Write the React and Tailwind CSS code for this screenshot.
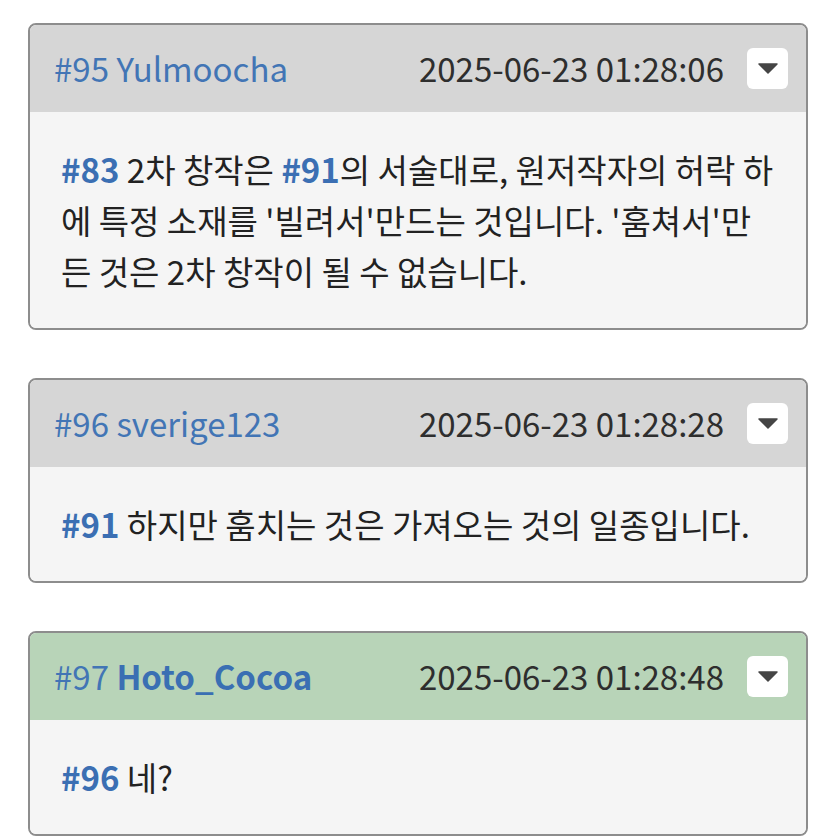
import React from "react";

const font = { fontFamily: '"Noto Sans CJK KR", "Noto Sans", sans-serif' };

function Ref({ n }) {
  return <span className="font-bold text-[#3b6fb3]">#{n}</span>;
}

function Card({ num, name, bold, date, green, children }) {
  return (
    <div className="rounded-[8px] border-2 border-[#8d8d8d] overflow-hidden">
      <div
        className={
          "h-[87px] flex items-center justify-between pl-[24px] pr-[18px] " +
          (green ? "bg-[#b8d4b8]" : "bg-[#d6d6d6]")
        }
      >
        <div className="text-[33px] text-[#4275b5] leading-none">
          #{num}{" "}
          <span className={bold ? "font-bold text-[#3a6fb3]" : ""}>{name}</span>
        </div>
        <div className="flex items-center">
          <div className="text-[33px] text-[#2e2e2e] leading-none mr-[23px]">{date}</div>
          <div className="w-[41px] h-[41px] bg-white rounded-[6px] flex items-center justify-center">
            <svg width="20" height="11" viewBox="0 0 20 11">
              <path d="M1 1 L19 1 L10 10 Z" fill="#454545" stroke="#454545" strokeWidth="1.5" strokeLinejoin="round" />
            </svg>
          </div>
        </div>
      </div>
      <div className="bg-[#f5f5f5] px-[31px] pt-[32px] pb-[31px] text-[33px] leading-[51px] text-[#222]">
        {children}
      </div>
    </div>
  );
}

export default function App() {
  return (
    <div className="bg-white min-h-[839px] px-[28px] pt-[23px] flex flex-col gap-[48px]" style={font}>
      <Card num="95" name="Yulmoocha" date="2025-06-23 01:28:06">
        <Ref n="83" /> 2차 창작은 <Ref n="91" />의 서술대로, 원저작자의 허락 하<br />
        에 특정 소재를 '빌려서'만드는 것입니다. '훔쳐서'만<br />
        든 것은 2차 창작이 될 수 없습니다.
      </Card>
      <Card num="96" name="sverige123" date="2025-06-23 01:28:28">
        <Ref n="91" /> 하지만 훔치는 것은 가져오는 것의 일종입니다.
      </Card>
      <Card num="97" name="Hoto_Cocoa" bold green date="2025-06-23 01:28:48">
        <Ref n="96" /> 네?
      </Card>
    </div>
  );
}
